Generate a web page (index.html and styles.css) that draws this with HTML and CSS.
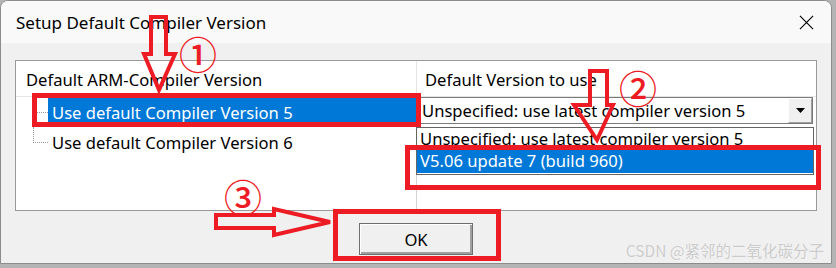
FILE: index.html
```html
<!DOCTYPE html>
<html lang="en">
<head>
    <meta charset="UTF-8">
    <meta name="viewport" content="width=device-width, initial-scale=1.0">
    <title>Setup Default Compiler Version</title>
    <link rel="stylesheet" href="styles.css">
</head>
<body>
    <div class="window">
        <div class="titlebar">
            <span class="title">Setup Default Compiler Version</span>
            <svg class="close" viewBox="0 0 16 16"><path d="M1 1L15 15M15 1L1 15"/></svg>
        </div>
        <div class="content">
            <div class="list">
                <div class="list-head">
                    <div class="col">Default ARM-Compiler Version</div>
                    <div class="col second">Default Version to use</div>
                </div>
                <div class="list-body">
                    <div class="tree">
                        <div class="node first">
                            <span class="branch"><i></i><i></i></span>
                            <span class="label selected">Use default Compiler Version 5</span>
                        </div>
                        <div class="node last">
                            <span class="branch"><i></i><i></i></span>
                            <span class="label">Use default Compiler Version 6</span>
                        </div>
                    </div>
                    <div class="versions">
                        <div class="combo">
                            <span class="combo-text">Unspecified: use latest compiler version 5</span>
                            <span class="combo-btn"><svg viewBox="0 0 9 5"><path d="M0 0H9L4.5 5Z"/></svg></span>
                        </div>
                        <ul class="dropdown">
                            <li>Unspecified: use latest compiler version 5</li>
                            <li class="selected">V5.06 update 7 (build 960)</li>
                        </ul>
                    </div>
                </div>
            </div>
            <div class="buttons">
                <button class="ok">OK</button>
            </div>
        </div>
        <div class="watermark">CSDN @紧邻的二氧化碳分子</div>
    </div>

    <!-- red annotations drawn over the dialog -->
    <svg class="marks" viewBox="0 0 836 268" width="836" height="268">
        <g fill="none" stroke="#ed1c24" stroke-width="5">
            <rect x="34.5" y="95.5" width="384" height="29"/>
            <rect x="407.5" y="147.5" width="411" height="40"/>
            <rect x="335.5" y="211.5" width="163" height="47"/>
        </g>
        <g fill="none" stroke="#ed1c24" stroke-width="4">
            <path d="M151 17H166V54H175L159 90L144 54H151Z"/>
            <path d="M590 71H607V105H613L597 140L574 105H590Z"/>
            <path d="M216 215H274V209L330 222L274 235V228H216Z"/>
        </g>
    </svg>
    <span class="num n1">①</span>
    <span class="num n2">②</span>
    <span class="num n3">③</span>
</body>
</html>
```

FILE: styles.css
```css
* {
    margin: 0;
    padding: 0;
    box-sizing: border-box;
}
body {
    width: 836px;
    height: 268px;
    position: relative;
    overflow: hidden;
    background: #b4b4b4;
    font-family: "Noto Sans", sans-serif;
    color: #000;
}
.window {
    position: relative;
    width: 832px;
    height: 264px;
    display: flex;
    flex-direction: column;
    background: #f0f0f0;
    border: 1px solid #8c8c8c;
    border-radius: 8px 8px 0 0;
    overflow: hidden;
}
.titlebar {
    height: 42px;
    display: flex;
    align-items: center;
    justify-content: space-between;
    padding: 0 17px 0 15px;
    background: #f9f9f9;
}
.title {
    font-size: 17px;
}
.close {
    width: 15px;
    height: 15px;
    fill: none;
    stroke: #000;
    stroke-width: 1.2;
}
.content {
    flex: 1;
    display: flex;
    flex-direction: column;
    padding: 17px 14px 0 14px;
}
.list {
    width: 802px;
    height: 151px;
    display: flex;
    flex-direction: column;
    background: #fff;
    border: 1px solid #9a9a9a;
    font-size: 16.6px;
}
.list-head {
    height: 36px;
    display: grid;
    grid-template-columns: 400px 1fr;
    border-bottom: 1px solid #e5e5e5;
}
.col {
    display: flex;
    align-items: center;
    padding: 2px 0 0 10px;
}
.col.second {
    padding-left: 8px;
    border-left: 1px solid #e5e5e5;
}
.list-body {
    flex: 1;
    display: grid;
    grid-template-columns: 400px 1fr;
}
.node {
    height: 30px;
    display: flex;
}
.branch {
    width: 32px;
    display: flex;
    flex-direction: column;
    padding-left: 17px;
}
.branch i {
    flex: 1;
}
.first .branch i:first-child {
    border-bottom: 1px dotted #9a9a9a;
}
.first .branch i:last-child {
    border-left: 1px dotted #9a9a9a;
}
.last .branch i:first-child {
    border-left: 1px dotted #9a9a9a;
    border-bottom: 1px dotted #9a9a9a;
}
.label {
    flex: 1;
    display: flex;
    align-items: center;
    padding-left: 4px;
}
.label.selected {
    margin: 1px 0;
    background: #0078d7;
    color: #fff;
}
.versions {
    position: relative;
    border-left: 1px solid #d4d4d4;
    padding-right: 3px;
}
.combo {
    height: 27px;
    display: flex;
    border: 1px solid #7a7a7a;
    background: #fff;
}
.combo-text {
    flex: 1;
    display: flex;
    align-items: center;
    padding-left: 4px;
}
.combo-btn {
    width: 24px;
    display: flex;
    align-items: center;
    justify-content: center;
    background: #f0f0f0;
    border: 1px solid #fff;
    border-right-color: #a0a0a0;
    border-bottom-color: #a0a0a0;
}
.combo-btn svg {
    width: 9px;
    height: 5px;
    fill: #000;
}
.dropdown {
    position: absolute;
    top: 30px;
    left: -1px;
    width: 398px;
    height: 48px;
    list-style: none;
    background: #fff;
    border: 1px solid #646464;
}
.dropdown li {
    height: 22px;
    line-height: 22px;
    padding-left: 3px;
}
.dropdown li.selected {
    height: 23px;
    background: #0078d7;
    color: #fff;
}
.buttons {
    display: flex;
    justify-content: center;
    padding-top: 12px;
}
.ok {
    width: 114px;
    height: 32px;
    font-family: "Noto Sans", sans-serif;
    font-size: 16.6px;
    color: #000;
    background: #f0f0f0;
    border: 1px solid #6e6e6e;
    box-shadow: inset 1px 1px 0 #fff, inset -2px -2px 0 #a0a0a0;
}
.watermark {
    position: absolute;
    right: 7px;
    bottom: 2px;
    font-family: "Noto Sans CJK SC", sans-serif;
    font-size: 15.5px;
    color: #cbcbcb;
    text-shadow: 0 0 1px #fff;
}
.marks {
    position: absolute;
    top: 0;
    left: 0;
    pointer-events: none;
}
.num {
    position: absolute;
    transform: translate(-50%, -50%);
    font-family: "Noto Sans CJK SC", sans-serif;
    font-size: 38px;
    font-weight: 500;
    line-height: 1;
    color: #ed1c24;
}
.n1 {
    left: 198px;
    top: 53px;
}
.n2 {
    left: 638px;
    top: 87px;
}
.n3 {
    left: 243px;
    top: 196px;
}
```
